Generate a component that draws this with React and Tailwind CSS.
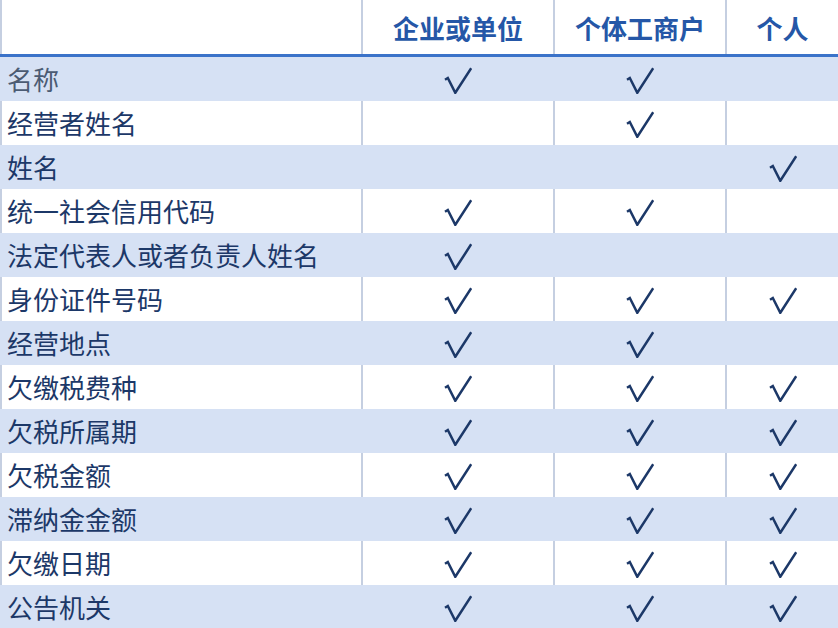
import React from "react";

const rows = [
  ["名称", true, true, false],
  ["经营者姓名", false, true, false],
  ["姓名", false, false, true],
  ["统一社会信用代码", true, true, false],
  ["法定代表人或者负责人姓名", true, false, false],
  ["身份证件号码", true, true, true],
  ["经营地点", true, true, false],
  ["欠缴税费种", true, true, true],
  ["欠税所属期", true, true, true],
  ["欠税金额", true, true, true],
  ["滞纳金金额", true, true, true],
  ["欠缴日期", true, true, true],
  ["公告机关", true, true, true],
];

const font = { fontFamily: '"Noto Sans CJK SC", "Noto Sans", sans-serif' };

function Check() {
  return (
    <svg width="28" height="27" viewBox="0 0 28 27" fill="none" className="mt-[2px]">
      <polyline
        points="1,12.7 3.8,11 11.3,25.8 27.2,1.3"
        stroke="#1c3868"
        strokeWidth="2.5"
        strokeLinejoin="miter"
        strokeLinecap="butt"
      />
    </svg>
  );
}

export default function App() {
  return (
    <div className="w-[838px] h-[628px] bg-white overflow-hidden" style={font}>
      <div className="grid grid-cols-[361px_192px_172px_1fr] h-[54px] text-[#2557a7] font-bold text-[26px]">
        <div className="border-l-2 border-[#c5cfe1]"></div>
        <div className="border-l-2 border-[#c5cfe1] flex items-center justify-center">企业或单位</div>
        <div className="border-l-2 border-[#c5cfe1] flex items-center justify-center">个体工商户</div>
        <div className="border-l-2 border-[#c5cfe1] flex items-center justify-center">个人</div>
      </div>
      <div className="h-[3px] bg-[#3b73c9]"></div>
      {rows.map((r, i) => {
        const shaded = i % 2 === 0;
        const b = shaded ? "border-[#d6e1f4]" : "border-[#c5cfe1]";
        const textColor = i === 0 ? "text-[#4b5b73]" : "text-[#1c3868]";
        return (
          <div
            key={i}
            className={`grid grid-cols-[361px_192px_172px_1fr] h-[44px] text-[26px] ${shaded ? "bg-[#d6e1f4]" : "bg-white"} ${textColor}`}
          >
            <div className={`border-l-2 ${b} flex items-center pl-[5px] leading-none`}>{r[0]}</div>
            {[1, 2, 3].map((c) => (
              <div key={c} className={`border-l-2 ${b} flex items-center justify-center`}>
                {r[c] ? <Check /> : null}
              </div>
            ))}
          </div>
        );
      })}
    </div>
  );
}
